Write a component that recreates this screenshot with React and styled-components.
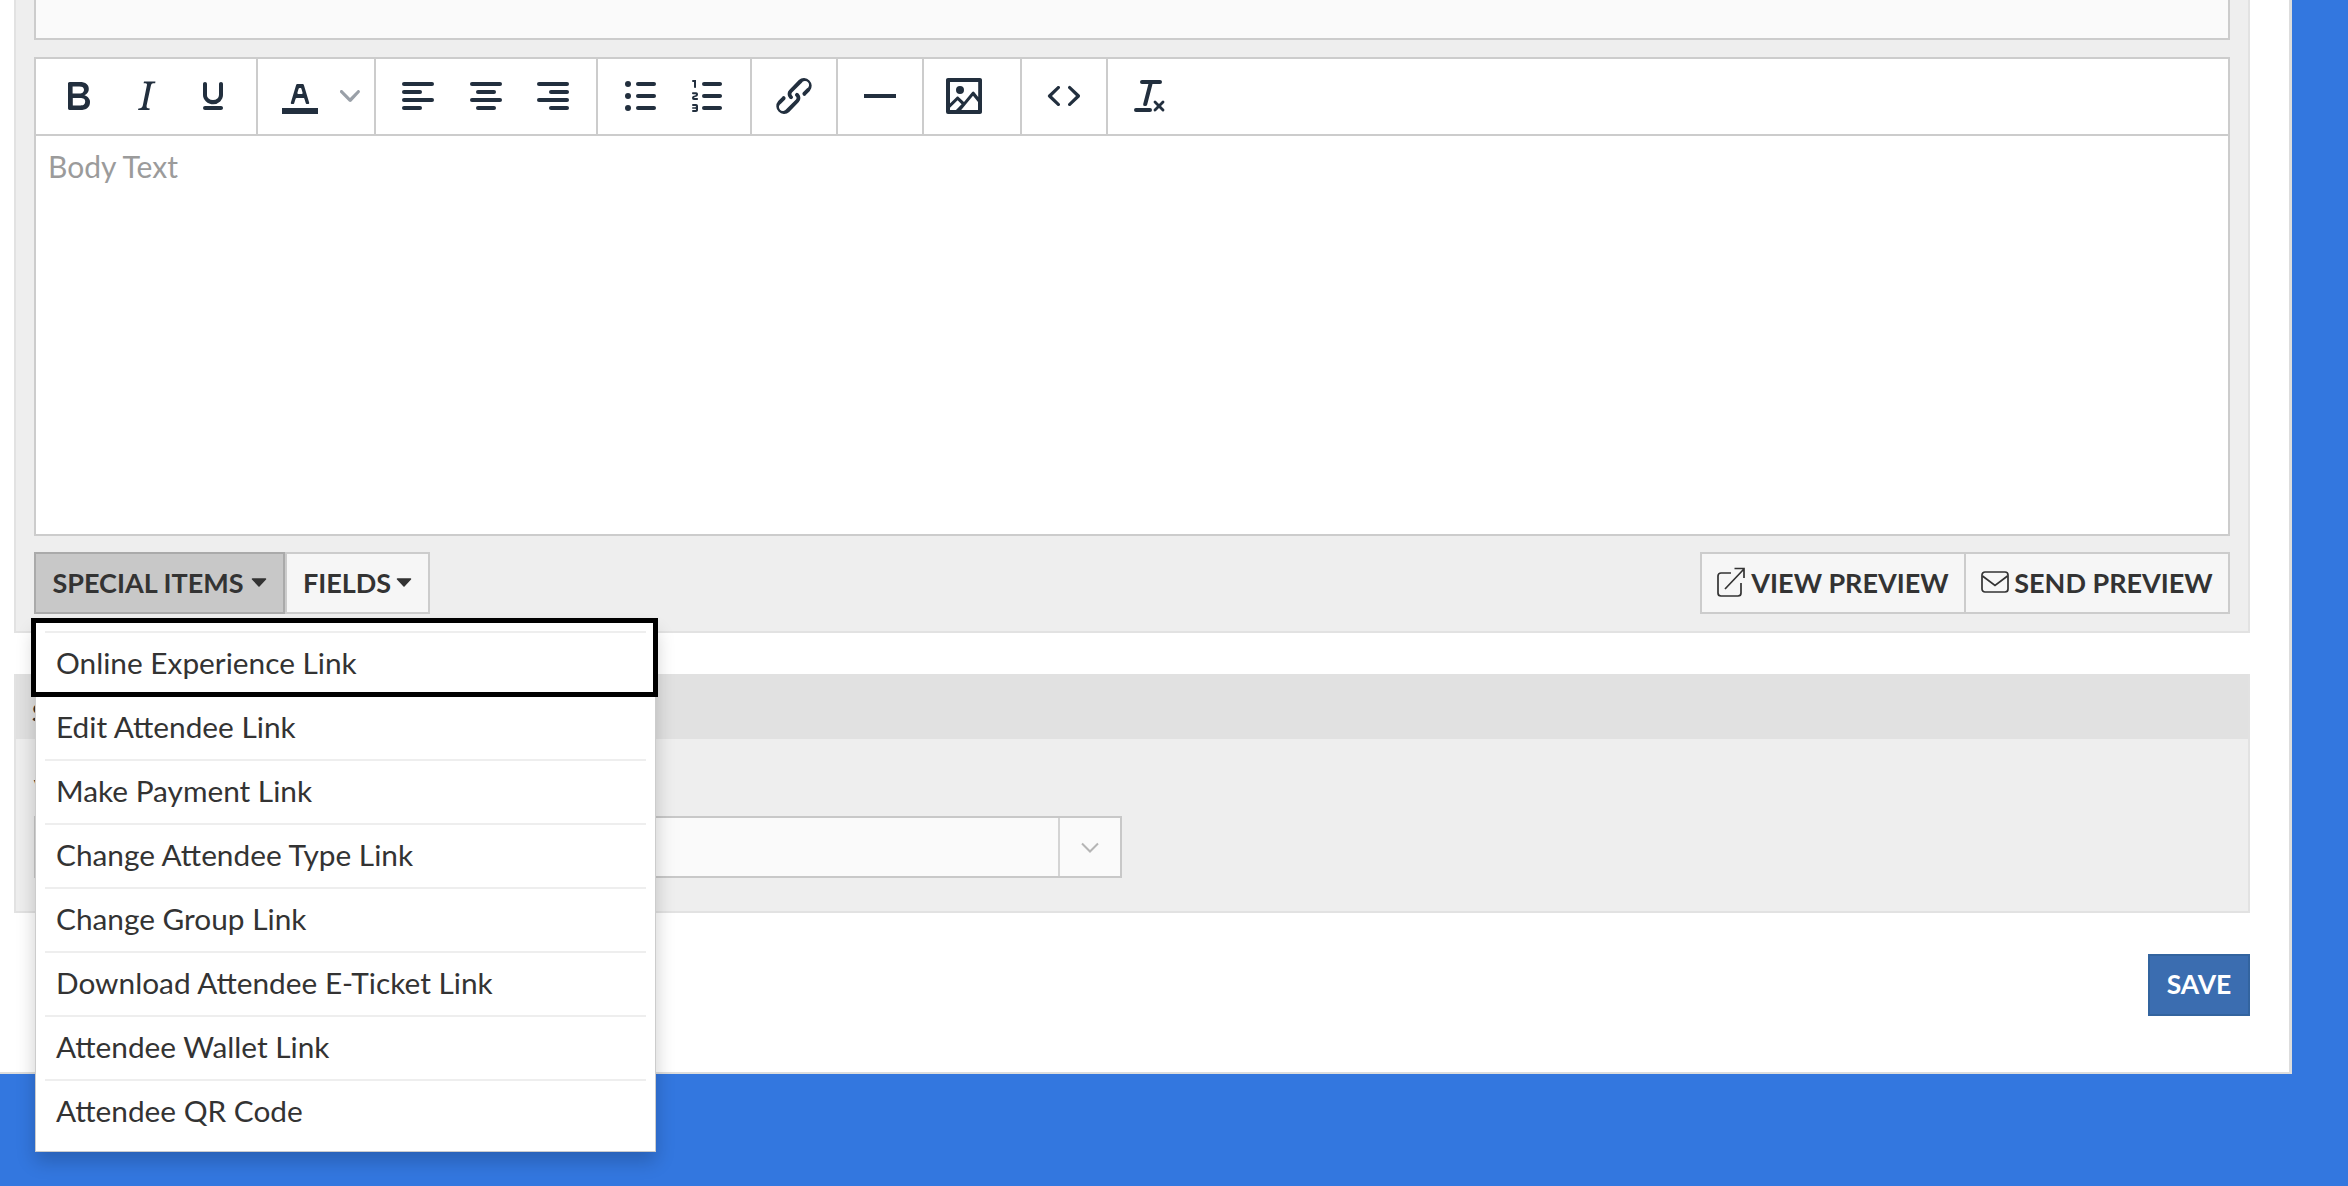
import React from "react";
import styled, { createGlobalStyle } from "styled-components";

const GlobalStyle = createGlobalStyle`
  html, body {
    margin: 0;
    padding: 0;
    background: #3377df;
  }
  * {
    box-sizing: border-box;
  }
`;

const Screen = styled.div`
  width: 2348px;
  height: 1186px;
  overflow: hidden;
  background: #3377df;
  font-family: Lato, "Liberation Sans", sans-serif;
  color: #333;
`;

const Page = styled.div`
  width: 2292px;
  height: 1074px;
  padding: 0 39px 0 14px;
  background: #fff;
  border-right: 3px solid #ddd;
  border-bottom: 2px solid #ddd;
`;

const Panel = styled.section`
  background: #eee;
  border: 2px solid #e2e2e2;
  border-top: ${(p) => (p.$cut ? "none" : "2px solid #e2e2e2")};
  margin-top: ${(p) => p.$top || 0}px;
  padding: ${(p) => p.$padding};
`;

const TopField = styled.div`
  height: 40px;
  background: #fafafa;
  border: 2px solid #ccc;
  border-top: none;
  margin-bottom: 17px;
`;

const Editor = styled.div`
  background: #fff;
  border: 2px solid #ccc;
`;

const Toolbar = styled.div`
  display: flex;
  height: 77px;
  border-bottom: 2px solid #ccc;
`;

const ToolGroup = styled.div`
  display: flex;
  width: ${(p) => p.$width}px;
  padding: 13px 0 0 8.5px;
  border-right: ${(p) => (p.$last ? "none" : "2px solid #ccc")};
`;

const ToolButton = styled.div`
  display: flex;
  flex: 0 0 ${(p) => p.$width || 67.5}px;
  height: 48px;
  align-items: center;
  justify-content: center;
  svg {
    fill: #222f3e;
  }
`;

const EditorBody = styled.div`
  height: 398px;
  padding: 10px 12px;
  font-size: 30px;
  line-height: 40px;
  color: #9b9b9b;
`;

const ActionRow = styled.div`
  display: flex;
  justify-content: space-between;
  margin-top: 16px;
`;

const ButtonGroup = styled.div`
  position: relative;
  display: flex;
`;

const Button = styled.button`
  display: flex;
  align-items: center;
  justify-content: center;
  gap: ${(p) => p.$gap}px;
  width: ${(p) => p.$width}px;
  height: 62px;
  margin-left: ${(p) => p.$overlap || 0}px;
  padding: 0 0 2px;
  font-family: inherit;
  font-size: 27px;
  font-weight: 700;
  color: #333;
  text-transform: uppercase;
  white-space: nowrap;
  background: ${(p) => (p.$active ? "#c8c8c8" : "#f6f6f6")};
  border: 2px solid ${(p) => (p.$active ? "#aaa" : "#ccc")};
`;

const Caret = () => (
  <svg width="16" height="9" viewBox="0 0 16 9">
    <path d="M1.5 1h13L8 8z" fill="#333" stroke="#333" strokeWidth="1.5" strokeLinejoin="round" />
  </svg>
);

const Menu = styled.ul`
  position: absolute;
  top: 71px;
  left: 1px;
  z-index: 10;
  width: 621px;
  margin: 0;
  padding: 8px 9px;
  list-style: none;
  background: #fff;
  border: 1px solid rgba(0, 0, 0, 0.2);
  border-top: none;
  box-shadow: 0 9px 18px rgba(0, 0, 0, 0.2);
`;

const MenuItem = styled.li`
  position: relative;
  height: 64px;
  padding-left: 11px;
  font-size: 29.8px;
  line-height: 60px;
  color: #333;
  white-space: nowrap;
  border-top: 2px solid #eee;

  ${(p) =>
    p.$focused &&
    `
    &::after {
      content: "";
      position: absolute;
      z-index: 1;
      inset: -15px -12px -2px -14px;
      border: 5px solid #000;
    }
  `}
`;

const SectionHeader = styled.div`
  height: 65px;
  margin-top: -2px;
  padding: 25px 0 0 16px;
  font-size: 25.5px;
  font-weight: 700;
  line-height: 26px;
  background: #e1e1e1;
`;

const SectionBody = styled.div`
  padding: 37px 18px 33px;
`;

const FieldLabel = styled.div`
  margin-bottom: 16px;
  font-size: 25.5px;
  font-weight: 700;
  line-height: 24px;
`;

const SelectBox = styled.div`
  display: flex;
  justify-content: flex-end;
  width: 1088px;
  height: 62px;
  background: #fafafa;
  border: 2px solid #c8c8c8;
`;

const SelectArrow = styled.div`
  display: flex;
  align-items: center;
  justify-content: center;
  width: 62px;
  border-left: 2px solid #d4d4d4;
`;

const SaveRow = styled.div`
  display: flex;
  justify-content: flex-end;
  margin-top: 41px;
`;

const SaveButton = styled.button`
  width: 102px;
  height: 62px;
  padding: 0 0 2px;
  font-family: inherit;
  font-size: 26.5px;
  font-weight: 700;
  color: #fff;
  background: #3b6db0;
  border: 2px solid #33649f;
`;

const Icon = ({ d }) => (
  <svg width="48" height="48" viewBox="0 0 24 24">
    <path d={d} fillRule="evenodd" />
  </svg>
);

const Lines = ({ items }) => (
  <svg width="48" height="48" viewBox="0 0 24 24">
    {items.map(([x, y, w]) => (
      <rect key={y} x={x} y={y} width={w} height="2" rx="1" />
    ))}
  </svg>
);

const BoldIcon = () => (
  <Icon d="M7.8 19c-.3 0-.5 0-.6-.2l-.2-.5V5.7c0-.2 0-.4.2-.5l.6-.2h5c1.5 0 2.7.3 3.5 1 .7.6 1.1 1.4 1.1 2.5a3 3 0 0 1-.6 1.9c-.4.6-1 1-1.6 1.2.4.1.9.3 1.3.6s.8.7 1 1.2c.4.4.5 1 .5 1.6 0 1.3-.4 2.3-1.3 3-.8.7-2.1 1-3.8 1H7.8zm5-8.3c.6 0 1.2-.1 1.6-.5.4-.3.6-.7.6-1.3 0-1.1-.8-1.7-2.3-1.7H9.3v3.5h3.4zm.5 6c.7 0 1.3-.1 1.7-.4.4-.4.6-.9.6-1.5s-.2-1-.7-1.4c-.4-.3-1-.4-2-.4H9.4v3.8h4z" />
);
const ItalicIcon = () => (
  <Icon d="M16.7 4.7l-.1.9h-.3c-.6 0-1 0-1.4.3-.3.3-.4.6-.5 1.1l-2.1 9.8v.6c0 .5.4.8 1.4.8h.2l-.2.8H8l.2-.8h.2c1.1 0 1.8-.5 2-1.5l2-9.8.1-.5c0-.6-.4-.8-1.4-.8h-.3l.2-.9h5.8z" />
);
const UnderlineIcon = () => (
  <Icon d="M16 5c.6 0 1 .4 1 1v5.5a4 4 0 0 1-.4 1.8l-1 1.4a5.3 5.3 0 0 1-5.5 1 5 5 0 0 1-1.6-1c-.5-.4-.8-.9-1.1-1.4a4 4 0 0 1-.4-1.8V6c0-.6.4-1 1-1s1 .4 1 1v5.5c0 .3 0 .6.2 1l.6.7a3.3 3.3 0 0 0 2.2.8 3.4 3.4 0 0 0 2.2-.8c.3-.2.4-.5.6-.8l.2-.9V6c0-.6.4-1 1-1zM8 17h8c.6 0 1 .4 1 1s-.4 1-1 1H8a1 1 0 0 1 0-2z" />
);
const TextColorIcon = () => (
  <Icon d="M3 18h18v3H3zM8.7 16h-.8a.5.5 0 0 1-.5-.6l2.7-9c.1-.3.3-.4.5-.4h2.8c.2 0 .4.1.5.4l2.7 9a.5.5 0 0 1-.5.6h-.8a.5.5 0 0 1-.4-.4l-.7-2.2c0-.3-.3-.4-.5-.4h-3.4c-.2 0-.4.1-.5.4l-.7 2.2c0 .3-.2.4-.4.4zm2.6-7.6l-.6 2a.5.5 0 0 0 .5.6h1.6a.5.5 0 0 0 .5-.6l-.6-2c0-.3-.3-.4-.5-.4h-.4c-.2 0-.4.1-.5.4z" />
);
const ChevronSmall = () => (
  <svg width="20" height="20" viewBox="0 0 10 10" style={{ fill: "#9aa0a8" }}>
    <path d="M8.7 2.2c.3-.3.8-.3 1 0 .4.4.4.9 0 1.2L5.7 7.8c-.3.3-.9.3-1.2 0L.2 3.4a.8.8 0 0 1 0-1.2c.3-.3.8-.3 1.1 0L5 6l3.7-3.8z" />
  </svg>
);
const AlignLeft = () => <Lines items={[[4, 5, 16], [4, 9, 10], [4, 13, 16], [4, 17, 10]]} />;
const AlignCenter = () => <Lines items={[[4, 5, 16], [7, 9, 10], [4, 13, 16], [7, 17, 10]]} />;
const AlignRight = () => <Lines items={[[4, 5, 16], [10, 9, 10], [4, 13, 16], [10, 17, 10]]} />;
const BulletList = () => (
  <svg width="48" height="48" viewBox="0 0 24 24">
    {[6, 12, 18].map((y) => (
      <g key={y}>
        <circle cx="6" cy={y} r="1.5" />
        <rect x="10" y={y - 1} width="10" height="2" rx="1" />
      </g>
    ))}
  </svg>
);
const NumberList = () => (
  <Icon d="M10 17h8c.6 0 1 .4 1 1s-.4 1-1 1h-8a1 1 0 0 1 0-2zm0-6h8c.6 0 1 .4 1 1s-.4 1-1 1h-8a1 1 0 0 1 0-2zm0-6h8c.6 0 1 .4 1 1s-.4 1-1 1h-8a1 1 0 1 1 0-2zM6 4v3.5c0 .3-.2.5-.5.5a.5.5 0 0 1-.5-.5V5h-.5a.5.5 0 0 1 0-1H6zm-1 8.8l.2.2h1.3c.3 0 .5.2.5.5s-.2.5-.5.5H4.9a1 1 0 0 1-.9-1V13c0-.4.3-.8.6-1l1.2-.4.2-.3a.2.2 0 0 0-.2-.2H4.5a.5.5 0 0 1-.5-.5c0-.3.2-.5.5-.5h1.6c.5 0 .9.4.9 1v.1c0 .4-.3.8-.6 1l-1.2.4-.2.3zM7 17v2c0 .6-.4 1-1 1H4.5a.5.5 0 0 1 0-1h1.2c.2 0 .3-.1.3-.3 0-.2-.1-.3-.3-.3H4.4a.4.4 0 1 1 0-.8h1.3c.2 0 .3-.1.3-.3 0-.2-.1-.3-.3-.3H4.5a.5.5 0 1 1 0-1H6c.6 0 1 .4 1 1v1z" />
);
const LinkIcon = () => (
  <Icon d="M6.2 12.3a1 1 0 0 1 1.4 1.4l-2 2a2 2 0 1 0 2.6 2.8l4.8-4.8a1 1 0 0 0 0-1.4 1 1 0 1 1 1.4-1.3 2.9 2.9 0 0 1 0 4L9.6 20a3.9 3.9 0 0 1-5.5-5.5l2-2zm11.6-.6a1 1 0 0 1-1.4-1.4l2-2a2 2 0 1 0-2.6-2.8L11 10.3a1 1 0 0 0 0 1.4A1 1 0 1 1 9.6 13a2.9 2.9 0 0 1 0-4L14.4 4a3.9 3.9 0 0 1 5.5 5.5l-2 2z" />
);
const RuleIcon = () => <Icon d="M4 11h16v2H4z" />;
const ImageIcon = () => (
  <Icon d="M5 15.7l3.3-3.2c.3-.3.7-.3 1 0L12 15l4.1-5c.3-.4.8-.4 1 0l2 2.5V5H5v10.7zM5 18V19h3l2.8-2.9-2-2L5 17.9zm14-3l-2.5-3.1L10.6 19H19v-4zM4 3h16c.6 0 1 .4 1 1v16c0 .6-.4 1-1 1H4a1 1 0 0 1-1-1V4c0-.6.4-1 1-1zm6 8a2 2 0 1 1 0-4 2 2 0 0 1 0 4z" />
);
const CodeIcon = () => (
  <Icon d="M9.8 15.7c.3.3.3.8 0 1-.3.4-.9.4-1.2 0l-4.4-4.1a.8.8 0 0 1 0-1.2l4.4-4.2c.3-.3.9-.3 1.2 0 .3.3.3.8 0 1.1L6 12l3.8 3.7zm4.4 0c-.3.3-.3.8 0 1 .3.4.9.4 1.2 0l4.4-4.1c.3-.3.3-.9 0-1.2l-4.4-4.2a.8.8 0 0 0-1.2 0c-.3.3-.3.8 0 1.1L18 12l-3.8 3.7z" />
);
const ClearIcon = () => (
  <Icon d="M13.2 6a1 1 0 0 1 0 .2l-2.6 10a1 1 0 0 1-1 .8h-.2a.8.8 0 0 1-.8-1l2.6-10H8a1 1 0 1 1 0-2h9a1 1 0 0 1 0 2h-3.8zM5 18h7a1 1 0 0 1 0 2H5a1 1 0 0 1 0-2zm13 1.5L16.5 18 15 19.5a.7.7 0 0 1-1-1l1.5-1.5-1.5-1.5a.7.7 0 0 1 1-1l1.5 1.5 1.5-1.5a.7.7 0 0 1 1 1L17.5 17l1.5 1.5a.7.7 0 0 1-1 1z" />
);

const ExternalIcon = () => (
  <svg width="28" height="30" viewBox="0 0 28 30" fill="none" stroke="#333" strokeWidth="1.7">
    <path d="M14 6H4a3 3 0 0 0-3 3v17a3 3 0 0 0 3 3h17a3 3 0 0 0 3-3V16" />
    <path d="M8 22L26.5 2.5M17.5 1.5h9.500v9.500" />
  </svg>
);

const MailIcon = () => (
  <svg width="28" height="22" viewBox="0 0 28 22" fill="none" stroke="#333" strokeWidth="1.7">
    <rect x="1" y="1" width="26" height="20" rx="3" />
    <path d="M1.500 5L14 14.500 26.500 5" />
  </svg>
);

const toolGroups = [
  { width: 222, tools: [<BoldIcon />, <ItalicIcon />, <UnderlineIcon />] },
  { width: 118, tools: [<TextColorIcon />, <ChevronSmall />], widths: [67.5, 32] },
  { width: 222, tools: [<AlignLeft />, <AlignCenter />, <AlignRight />] },
  { width: 154, tools: [<BulletList />, <NumberList />] },
  { width: 86, tools: [<LinkIcon />] },
  { width: 86, tools: [<RuleIcon />] },
  { width: 98, tools: [<ImageIcon />], widths: [63] },
  { width: 86, tools: [<CodeIcon />] },
  { width: 86, tools: [<ClearIcon />], last: true },
];

const specialItems = [
  "Online Experience Link",
  "Edit Attendee Link",
  "Make Payment Link",
  "Change Attendee Type Link",
  "Change Group Link",
  "Download Attendee E-Ticket Link",
  "Attendee Wallet Link",
  "Attendee QR Code",
];

export default function App() {
  return (
    <Screen>
      <GlobalStyle />
      <Page>
        <Panel $cut $padding="0 18px 17px">
          <TopField />
          <Editor>
            <Toolbar>
              {toolGroups.map((group, i) => (
                <ToolGroup key={i} $width={group.width} $last={group.last}>
                  {group.tools.map((tool, j) => (
                    <ToolButton key={j} $width={group.widths && group.widths[j]}>
                      {tool}
                    </ToolButton>
                  ))}
                </ToolGroup>
              ))}
            </Toolbar>
            <EditorBody>Body Text</EditorBody>
          </Editor>
          <ActionRow>
            <ButtonGroup>
              <Button $active $width={251} $gap={7}>
                Special Items <Caret />
              </Button>
              <Button $width={145} $gap={5}>
                Fields <Caret />
              </Button>
              <Menu>
                {specialItems.map((item, i) => (
                  <MenuItem key={item} $focused={i === 0}>
                    {item}
                  </MenuItem>
                ))}
              </Menu>
            </ButtonGroup>
            <ButtonGroup>
              <Button $width={266} $gap={6}>
                <ExternalIcon /> View Preview
              </Button>
              <Button $width={266} $gap={5} $overlap={-2}>
                <MailIcon /> Send Preview
              </Button>
            </ButtonGroup>
          </ActionRow>
        </Panel>
        <Panel $top={41}>
          <SectionHeader>S</SectionHeader>
          <SectionBody>
            <FieldLabel>V</FieldLabel>
            <SelectBox>
              <SelectArrow>
                <svg width="20" height="11" viewBox="0 0 20 11" fill="none" stroke="#b5b5b5" strokeWidth="2">
                  <path d="M2 1.500l8 8 8-8" />
                </svg>
              </SelectArrow>
            </SelectBox>
          </SectionBody>
        </Panel>
        <SaveRow>
          <SaveButton>SAVE</SaveButton>
        </SaveRow>
      </Page>
    </Screen>
  );
}
